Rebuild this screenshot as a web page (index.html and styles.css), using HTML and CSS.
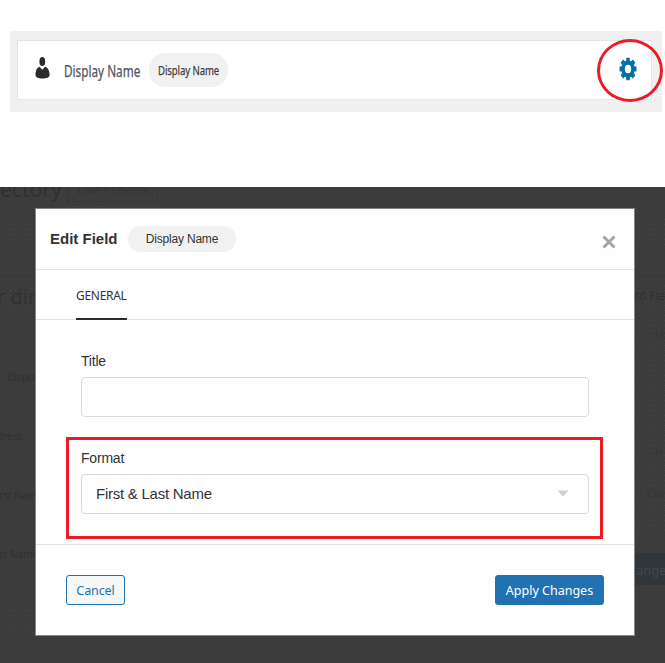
FILE: index.html
```html
<!DOCTYPE html>
<html lang="en">
<head>
<meta charset="utf-8">
<title>Edit Field</title>
<link rel="stylesheet" href="styles.css">
</head>
<body>
<section class="strip">
  <div class="field-row">
    <svg class="user" viewBox="0 0 16 22" width="16" height="22"><ellipse cx="7.3" cy="4.5" rx="2.900" ry="4.5"/><path d="M4.6 9.7 7.3 12.7 10 9.7C13 10.5 14.5 13.5 14.6 18C14.7 20.5 11 21.5 7.5 21.5S.4 20.5.5 18C.6 13.5 1.8 10.5 4.6 9.7Z"/></svg>
    <span class="field-name"><span class="narrow">Display Name</span></span>
    <span class="field-pill"><span class="narrow">Display Name</span></span>
    <span class="gear-wrap">
      <svg class="gear" viewBox="-9 -12 18 24" width="18" height="24"><g transform="scale(.76 1)"><rect x="-2.4" y="-11.2" width="4.8" height="22.4" rx=".6"/><rect x="-2.4" y="-11.2" width="4.8" height="22.4" rx=".6" transform="rotate(45)"/><rect x="-2.4" y="-11.2" width="4.8" height="22.4" rx=".6" transform="rotate(90)"/><rect x="-2.4" y="-11.2" width="4.8" height="22.4" rx=".6" transform="rotate(135)"/><circle r="8.7"/><circle class="hole" r="4.2"/></g></svg>
      <span class="ring"></span>
    </span>
  </div>
</section>
<section class="stage">
  <div class="backdrop">
    <span class="ghost g-title">ectory</span>
    <span class="ghost g-live">Live Preview</span>
    <span class="ghost g-dir">r dir</span>
    <span class="ghost g-a">Displa</span>
    <span class="ghost g-b">dress</span>
    <span class="ghost g-c">rst Nam</span>
    <span class="ghost g-d">st Name</span>
    <span class="ghost g-fields">rd Fie</span>
    <span class="ghost g-us">Us</span>
    <span class="ghost g-n">N</span>
    <span class="ghost g-cus">Cus</span>
    <span class="ghost g-btn">ange</span>
    <i class="dots d1"></i><i class="dots d2"></i><i class="dots d3"></i><i class="dots d4"></i><i class="dots d5"></i>
    <i class="rule"></i>
  </div>
  <div class="modal">
    <header class="head">
      <strong>Edit Field</strong>
      <span class="pill">Display Name</span>
      <svg class="close" viewBox="0 0 14 14" width="14" height="14"><path d="M1.5 1.5 12.500 12.500M12.500 1.500 1.500 12.500"/></svg>
    </header>
    <nav class="tabs"><span class="tab">GENERAL</span></nav>
    <main class="body">
      <div class="group">
        <label>Title</label>
        <div class="input"></div>
      </div>
      <div class="group marked">
        <label>Format</label>
        <div class="input select"><span>First &amp; Last Name</span><svg viewBox="0 0 12 7" width="12" height="7"><path d="M.5.5H11.5L6 6.5Z"/></svg></div>
      </div>
    </main>
    <footer class="foot">
      <button class="btn cancel">Cancel</button>
      <button class="btn apply">Apply Changes</button>
    </footer>
  </div>
</section>
</body>
</html>
```
FILE: styles.css
```css
* { box-sizing: border-box; }
body { margin: 0; width: 665px; height: 663px; overflow: hidden; background: #fff; font-family: "Liberation Sans", Arial, sans-serif; color: #333; }
.strip { margin: 31px 3px 0 10px; height: 81px; background: #f0f0f0; padding: 9px 10px 12px 7px; }
.field-row { height: 60px; background: #fff; border: 1px solid #e5e5e5; display: flex; align-items: center; padding: 0 14px 0 17px; font-family: "Noto Sans", sans-serif; }
.user { fill: #2b2b2b; margin-top: -5px; }
.field-name { width: 76px; margin-left: 13px; padding-top: 2px; font-size: 16px; color: #50575e; white-space: nowrap; }
.narrow { display: inline-block; transform-origin: 0 50%; transform: scaleX(.735); -webkit-text-stroke: .25px currentColor; }
.field-pill { width: 79px; height: 34px; line-height: 35px; margin-left: 9px; padding-left: 9px; border-radius: 16px; background: #f1f1f1; font-size: 13px; color: #3c3c3c; white-space: nowrap; letter-spacing: -.1px; }
.gear-wrap { position: relative; margin-left: auto; width: 18px; height: 24px; margin-top: -2px; }
.gear { display: block; fill: #0073aa; }
.gear .hole { fill: #fff; }
.ring { position: absolute; left: -22px; top: -18px; width: 66px; height: 63px; border: 3px solid #ed1c24; border-radius: 50%; }
.stage { position: relative; margin-top: 75px; height: 476px; background: #3c3c3c; padding: 21px 30px 0 35px; overflow: hidden; }
.backdrop { position: absolute; inset: 0; font-family: "Noto Sans", sans-serif; }
.ghost { position: absolute; color: #303030; white-space: nowrap; line-height: 20px; font-size: 10px; }
.g-title { left: 0; top: -8px; font-size: 21px; }
.g-live { left: 67px; top: -12px; width: 91px; height: 27px; line-height: 27px; padding-left: 9px; border: 1px dashed #333; font-size: 12.5px; color: #303638; }
.g-dir { left: -3px; top: 100px; font-size: 20px; }
.g-a { left: 7px; top: 180px; }
.g-b { left: -3px; top: 239px; }
.g-c { left: -1px; top: 298px; }
.g-d { left: -1px; top: 357px; }
.g-fields { left: 634px; top: 99px; font-size: 12px; }
.g-us { left: 655px; top: 138px; color: #303638; }
.g-n { left: 655px; top: 256px; color: #303638; }
.g-cus { left: 647px; top: 296px; color: #303638; }
.g-btn { left: 600px; top: 366px; width: 80px; height: 32px; line-height: 34px; padding-left: 36px; font-size: 13px; background: #2f373d; color: #40474c; }
.dots { position: absolute; background: radial-gradient(circle, #4b4b4b .6px, transparent .8px) 0 0 / 5px 5px; opacity: .6; }
.d1 { left: 3px; top: 30px; width: 30px; height: 32px; }
.d2 { left: 3px; top: 96px; width: 30px; height: 38px; }
.d3 { left: 3px; top: 416px; width: 30px; height: 38px; }
.d4 { left: 637px; top: 30px; width: 28px; height: 32px; }
.d5 { left: 637px; top: 96px; width: 28px; height: 250px; }
.rule { position: absolute; left: 0; right: 0; top: 89px; height: 1px; background: #363636; }
.modal { position: relative; height: 428px; background: #fefefe; border: 1px solid #858585; display: flex; flex-direction: column; }
.head { height: 61px; border-bottom: 1px solid #e2e4e7; display: flex; align-items: center; padding: 0 19px 0 14px; }
.head strong { font-size: 15px; width: 68px; white-space: nowrap; margin-top: -2px; }
.pill { margin-left: 10px; width: 108px; height: 26px; line-height: 26px; border-radius: 13px; background: #f1f1f1; text-align: center; font-size: 12px; letter-spacing: -.2px; }
.close { margin-left: auto; margin-top: 5px; margin-right: -1px; stroke: #a5a5a5; stroke-width: 3; fill: none; }
.tabs { height: 50px; border-bottom: 1px solid #e2e4e7; padding-left: 40px; }
.tab { display: block; width: 51px; height: 50px; border-bottom: 2px solid #2c2c2c; line-height: 51px; font-family: "Noto Sans", sans-serif; font-size: 12px; letter-spacing: -.3px; white-space: nowrap; }
.body { height: 225px; border-bottom: 1px solid #e2e4e7; padding: 20px 31px 0 30px; }
.group { height: 97px; padding: 11px 14px 0 15px; }
label { display: block; height: 26px; line-height: 20px; font-size: 14px; letter-spacing: -.2px; }
.input { height: 40px; border: 1px solid #d9d9d9; border-radius: 4px; background: #fff; }
.marked { height: 102px; border: 3px solid #ed1c24; padding: 8px 11px 0 12px; }
.select { display: flex; align-items: center; justify-content: space-between; padding: 0 19px 0 14px; font-size: 15px; letter-spacing: -.25px; }
.select span { margin-top: -2px; }
.select svg { fill: #cfcfcf; margin-top: -1px; }
.foot { flex: 1; display: flex; align-items: flex-start; justify-content: space-between; padding: 30px 30px 0; }
.btn { height: 30px; border: 1px solid #2271b1; border-radius: 3px; padding: 1px 0 0; font: 12.5px/27px "Noto Sans", sans-serif; white-space: nowrap; }
.cancel { width: 59px; color: #2271b1; background: #f6f7f7; letter-spacing: -.1px; }
.apply { width: 109px; background: #2271b1; color: #fff; }
```
